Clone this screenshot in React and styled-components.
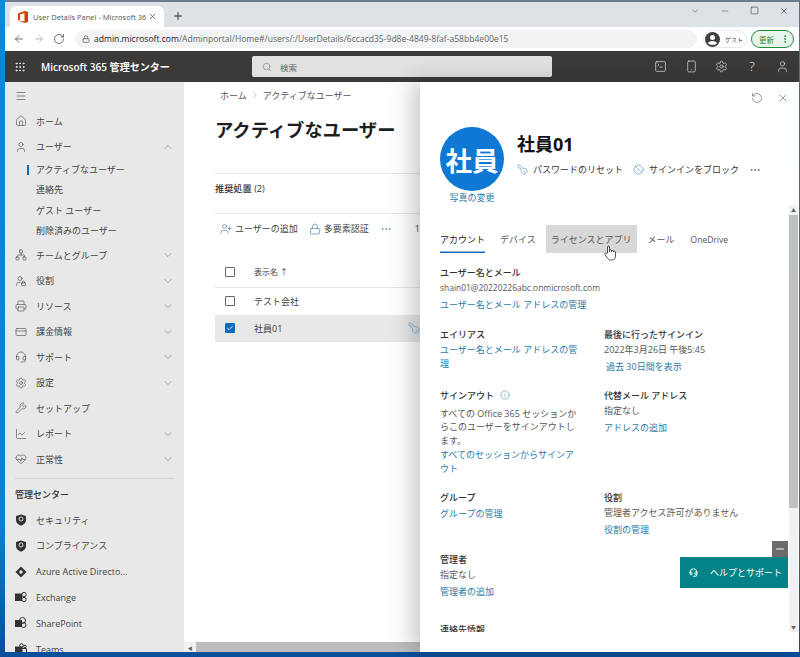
import React from 'react';
import styled, { createGlobalStyle } from 'styled-components';
import {
  ArrowLeft, ArrowRight, Ban, ChartLine, ChevronDown, ChevronRight, ChevronUp, CreditCard, Ellipsis, EllipsisVertical,
  Grip, Headset, HeartPulse, House, Info, KeyRound, Lock, Menu, Minus, Network, Plus, Printer, RotateCcw, RotateCw,
  Search, Settings, Smartphone, Square, SquareTerminal, User, UserLock, UserPlus, Wrench, X, Check,
} from 'lucide-react';

const FONT = `"Open Sans", "Noto Sans CJK JP", sans-serif`;

const Global = createGlobalStyle`
  html, body { margin: 0; padding: 0; }
  body { font-family: ${FONT}; color: #323130; }
  * { box-sizing: border-box; }
`;

const Desktop = styled.div`
  width: 800px;
  height: 657px;
  overflow: hidden;
  padding: 0 1px 5px 5px;
  background: linear-gradient(180deg, #0a8ad8 0%, #0a80cf 80%, #0b4f9c 99%);
`;
const Window = styled.div`
  height: 652px;
  display: flex;
  flex-direction: column;
  border-top: 2px solid #6f7c8b;
  background: #fff;
`;

/* browser chrome */
const TabStrip = styled.div`
  height: 25px;
  flex: none;
  display: flex;
  align-items: flex-end;
  padding-left: 5px;
  background: #dee1e6;
`;
const BrowserTab = styled.div`
  width: 154px;
  height: 21px;
  display: flex;
  align-items: center;
  padding: 0 7px 0 8px;
  background: #fff;
  border-radius: 6px 6px 0 0;
  font-size: 7.5px;
  color: #555;
`;
const TabTitle = styled.span`
  flex: 1;
  margin-left: 5px;
  overflow: hidden;
  white-space: nowrap;
`;
const NewTab = styled.span`
  display: flex;
  margin: 0 0 5px 8px;
  color: #333;
`;
const WinControls = styled.div`
  margin-left: auto;
  align-self: stretch;
  display: flex;
  align-items: center;
  gap: 20px;
  padding: 0 10px 8px 0;
  color: #444;
`;
const UrlRow = styled.div`
  height: 24px;
  flex: none;
  display: flex;
  align-items: center;
  padding: 0 4px 0 8px;
  color: #5f6368;
  background: #fff;
`;
const NavButtons = styled.div`
  display: flex;
  gap: 8px;
  width: 62px;
  flex: none;
`;
const Omnibox = styled.div`
  width: 622px;
  height: 18px;
  flex: none;
  display: flex;
  align-items: center;
  gap: 4px;
  padding-left: 7px;
  background: #f1f3f4;
  border-radius: 9px;
  font-size: 8.56px;
  color: #666;
  white-space: nowrap;
`;
const Host = styled.span`
  color: #222;
`;
const ProfileChip = styled.div`
  width: 44px;
  height: 18px;
  margin-left: 6px;
  display: flex;
  align-items: center;
  gap: 5px;
  padding-left: 1px;
  border: 1px solid #e8eaed;
  border-radius: 9px;
  font-size: 6px;
  color: #444;
`;
const UpdateChip = styled.div`
  width: 43px;
  height: 18px;
  margin-left: 4px;
  display: flex;
  align-items: center;
  justify-content: space-between;
  padding: 0 3px 0 7px;
  border: 1px solid #1e8e3e;
  border-radius: 9px;
  background: #e9f5ec;
  font-size: 7.5px;
  color: #1e8e3e;
`;

/* admin header */
const TopBar = styled.div`
  height: 31px;
  flex: none;
  display: flex;
  align-items: center;
  padding-left: 9px;
  background: #3c3a38;
  color: #fff;
`;
const Brand = styled.span`
  width: 211px;
  margin-left: 15px;
  font-size: 10.05px;
  font-weight: 600;
  white-space: nowrap;
`;
const SearchBox = styled.div`
  width: 300px;
  height: 21px;
  display: flex;
  align-items: center;
  gap: 8px;
  padding-left: 10px;
  background: #e3e1df;
  border-radius: 2px;
  font-size: 8.5px;
  color: #666;
`;
const TopIcons = styled.div`
  margin-left: auto;
  display: flex;
  align-items: center;
  gap: 17.500px;
  padding-right: 10px;
  color: #eee;
`;
const HelpGlyph = styled.span`
  width: 13px;
  text-align: center;
  font-size: 13px;
  line-height: 13px;
  font-weight: 300;
`;

const Body = styled.div`
  flex: 1;
  min-height: 0;
  display: flex;
`;

/* left nav */
const Sidebar = styled.nav`
  width: 179px;
  flex: none;
  overflow: hidden;
  padding: 1px 10px 0;
  background: #e8e8e8;
  color: #444;
`;
const NavRow = styled.div`
  height: ${p => p.$h || 25.5}px;
  display: flex;
  align-items: center;
  font-size: 9px;
  white-space: nowrap;
`;
const NavIcon = styled.span`
  width: 21px;
  flex: none;
  display: flex;
  color: #444;
`;
const NavChevron = styled.span`
  margin-left: auto;
  display: flex;
  color: #777;
`;
const SubList = styled.div`
  margin-bottom: 2px;
`;
const SubRow = styled.div`
  height: 20.300px;
  display: flex;
  align-items: center;
  padding-left: 21px;
  font-size: 9px;
  position: relative;
  &::before {
    content: '';
    display: ${p => (p.$active ? 'block' : 'none')};
    position: absolute;
    left: 12px;
    top: 5px;
    width: 2px;
    height: 10px;
    background: #0f6cbd;
  }
`;
const NavDivider = styled.div`
  height: 1px;
  margin: 6px 0 3px;
  background: #d2d2d2;
`;
const NavHeading = styled.div`
  height: 25px;
  display: flex;
  align-items: center;
  font-size: 9px;
  font-weight: 500;
  color: #333;
`;

/* users list behind the panel */
const Main = styled.main`
  flex: 1;
  min-width: 0;
  display: flex;
  flex-direction: column;
`;
const MainContent = styled.div`
  flex: 1;
  min-height: 0;
  overflow: hidden;
  padding: 0 0 0 31px;
`;
const Breadcrumb = styled.div`
  height: 26px;
  display: flex;
  align-items: center;
  gap: 3px;
  padding-left: 5px;
  font-size: 9px;
  color: #555;
  white-space: nowrap;
  svg { color: #888; }
`;
const Title = styled.h1`
  margin: 8px 0 0;
  height: 57px;
  font-size: 18.300px;
  line-height: 28px;
  font-weight: 700;
  color: #201f1e;
  white-space: nowrap;
`;
const Recommend = styled.div`
  height: 41px;
  display: flex;
  align-items: center;
  padding-bottom: 12px;
  border-top: 1px solid #e6e6e6;
  border-bottom: 1px solid #e6e6e6;
  font-size: 9.200px;
  font-weight: 500;
  color: #333;
`;
const Commands = styled.div`
  height: 29px;
  display: flex;
  align-items: center;
  padding-left: 5px;
  margin-bottom: 1px;
  font-size: 9px;
  color: #444;
  white-space: nowrap;
`;
const Command = styled.span`
  display: flex;
  align-items: center;
  gap: 3px;
  margin-right: ${p => p.$gap || 11}px;
  color: #444;
  svg { color: #3a6ea5; }
`;
const TableRow = styled.div`
  height: ${p => p.$h || 27}px;
  display: flex;
  align-items: center;
  padding: ${p => p.$pt || 0}px 0 1px 10px;
  gap: 19px;
  font-size: ${p => p.$size || 9}px;
  color: ${p => p.$color || '#444'};
  background: ${p => (p.$selected ? '#e8e8e8' : 'transparent')};
  border-bottom: ${p => (p.$line ? '1px solid #e6e6e6' : 'none')};
`;
const Check_ = styled.span`
  width: 10px;
  height: 10px;
  flex: none;
  display: flex;
  align-items: center;
  justify-content: center;
  border: 1px solid ${p => (p.$on ? '#0f6cbd' : '#666')};
  background: ${p => (p.$on ? '#0f6cbd' : '#fff')};
  border-radius: 1px;
  color: #fff;
`;
const RowKey = styled.span`
  margin-left: auto;
  display: flex;
  color: #4a90c8;
`;
const KeyIcon = styled(KeyRound)`
  transform: rotate(90deg);
`;
const HScroll = styled.div`
  height: 10px;
  flex: none;
  display: flex;
  align-items: center;
  background: #f1f1f1;
  color: #666;
  font-size: 5px;
`;
const HArrow = styled.span`
  width: 12px;
  flex: none;
  text-align: center;
`;
const HThumb = styled.div`
  flex: 1;
  align-self: stretch;
  background: #bdbdbd;
`;

/* details panel */
const Panel = styled.aside`
  width: 379px;
  flex: none;
  position: relative;
  display: flex;
  flex-direction: column;
  background: #fff;
  box-shadow: -8px 0 22px rgba(0, 0, 0, 0.22);
`;
const PanelTools = styled.div`
  height: 32px;
  flex: none;
  display: flex;
  justify-content: flex-end;
  align-items: center;
  gap: 14px;
  padding-right: 10px;
  color: #555;
`;
const PanelHead = styled.div`
  height: 91px;
  flex: none;
  display: flex;
  padding: 13px 0 0 20px;
`;
const AvatarCol = styled.div`
  width: 64px;
  flex: none;
  display: flex;
  flex-direction: column;
  align-items: center;
`;
const Avatar = styled.div`
  width: 64px;
  height: 64px;
  flex: none;
  display: flex;
  align-items: center;
  justify-content: center;
  border-radius: 50%;
  background: #0f78d4;
  color: #fff;
  font-size: 26.500px;
  font-weight: 700;
  white-space: nowrap;
`;
const PhotoLink = styled.a`
  margin-top: 1px;
  font-size: 9px;
  line-height: 12px;
  color: #2a7aa8;
  white-space: nowrap;
`;
const HeadInfo = styled.div`
  margin-left: 13px;
`;
const UserName = styled.div`
  margin-top: 4px;
  font-size: 18px;
  line-height: 26px;
  font-weight: 700;
  color: #111;
`;
const HeadActions = styled.div`
  margin-top: 6px;
  display: flex;
  align-items: center;
  font-size: 9px;
  color: #333;
  white-space: nowrap;
`;
const HeadAction = styled.span`
  display: flex;
  align-items: center;
  gap: 5px;
  margin-right: ${p => p.$gap}px;
  svg { color: #3a86c0; }
`;
const ScrollWrap = styled.div`
  flex: 1;
  min-height: 0;
  display: flex;
  padding-bottom: 20px;
`;
const PanelScroll = styled.div`
  flex: 1;
  min-width: 0;
  overflow: hidden;
  padding: 20px 0 0 20px;
`;
const Tabs = styled.div`
  height: 28px;
  display: flex;
  align-items: stretch;
  font-size: 9px;
  color: #555;
  white-space: nowrap;
`;
const Tab = styled.div`
  display: flex;
  align-items: center;
  margin-right: ${p => p.$gap || 0}px;
  padding: 0 ${p => p.$pad || 0}px;
  color: ${p => (p.$active ? '#222' : '#555')};
  background: ${p => (p.$hover ? '#d8d8d8' : 'transparent')};
  font-size: ${p => p.$size || 9}px;
  box-shadow: ${p => (p.$active ? 'inset 0 -1.5px 0 #0f6cbd' : 'none')};
`;
const Fields = styled.div`
  margin-top: 11px;
  display: grid;
  grid-template-columns: 164px 170px;
  grid-template-rows: 62px 61px 102px 62px 70px auto;
`;
const Field = styled.div`
  grid-column: ${p => (p.$wide ? '1 / span 2' : 'auto')};
  grid-row: ${p => p.$row};
  padding-right: ${p => (p.$wide ? 0 : 26)}px;
`;
const FieldTitle = styled.div`
  display: flex;
  align-items: center;
  gap: 6px;
  height: 16px;
  font-size: 9px;
  font-weight: 500;
  color: #333;
  svg { color: #2a7aa8; }
`;
const FieldText = styled.div`
  margin-top: ${p => p.$top || 0}px;
  font-size: ${p => p.$size || 9}px;
  line-height: ${p => p.$lh || 16}px;
  color: #555;
`;
const FieldLink = styled.a`
  display: block;
  margin-top: ${p => p.$top ?? 1}px;
  padding-left: ${p => p.$indent || 0}px;
  font-size: 9px;
  line-height: ${p => p.$lh || 15.500}px;
  color: #2a7aa8;
`;
const ScrollBar = styled.div`
  width: 9px;
  flex: none;
  margin-right: 1px;
  display: flex;
  flex-direction: column;
  align-items: center;
  background: #f1f1f1;
  color: #666;
  font-size: 5px;
  line-height: 10px;
`;
const Thumb = styled.div`
  width: 100%;
  height: 293px;
  background: #c1c1c1;
`;
const ArrowDown = styled.div`
  margin-top: auto;
`;
const HandCursor = styled.span`
  position: absolute;
  left: 184px;
  top: 163px;
  display: flex;
  color: #222;
`;
const HelpWidget = styled.div`
  position: absolute;
  left: 260px;
  top: 475px;
  width: 108px;
  height: 31px;
  display: flex;
  align-items: center;
  gap: 12px;
  padding-left: 9px;
  background: #038387;
  color: #fff;
  font-size: 9px;
  white-space: nowrap;
`;
const HelpMin = styled.span`
  position: absolute;
  right: 0;
  top: -16px;
  width: 16px;
  height: 16px;
  display: flex;
  align-items: center;
  justify-content: center;
  background: #6b6b6b;
  color: #fff;
`;

const OfficeLogo = () => (
  <svg width="10" height="12" viewBox="0 0 10 12">
    <path d="M0 2.500 6.500 0 10 1v10l-3.500 1L0 9.600l6.500.9V2.200L2 3.200v5.600L0 9.600z" fill="#d83b01" />
  </svg>
);
const GuestAvatar = () => (
  <svg width="15" height="15" viewBox="0 0 15 15">
    <circle cx="7.500" cy="7.500" r="7.500" fill="#3c4043" />
    <circle cx="7.500" cy="5.600" r="2.500" fill="#fff" />
    <path d="M2.800 11.300c1-1.700 2.800-2.400 4.700-2.400s3.700.7 4.700 2.400c-2.400 2.300-7 2.300-9.400 0z" fill="#fff" />
  </svg>
);
const ShieldIcon = () => (
  <svg width="12" height="12" viewBox="0 0 12 12">
    <path d="M6 .5 11 2v4c0 3-2.200 4.700-5 5.700C3.200 10.700 1 9 1 6V2z" fill="#333" />
    <circle cx="6" cy="5" r="2" fill="none" stroke="#e8e8e8" strokeWidth=".9" />
  </svg>
);
const AzureIcon = () => (
  <svg width="12" height="12" viewBox="0 0 12 12">
    <path d="M6 .5 11.500 6 6 11.500 .5 6z" fill="#333" />
    <circle cx="6" cy="6" r="1.700" fill="#e8e8e8" />
  </svg>
);
const ExchangeIcon = () => (
  <svg width="12" height="12" viewBox="0 0 12 12" fill="none" stroke="#333">
    <rect x=".5" y="3" width="6" height="6.500" fill="#333" />
    <circle cx="9" cy="3.500" r="2.200" />
    <circle cx="9" cy="8.500" r="2.200" />
  </svg>
);
const SharePointIcon = () => (
  <svg width="12" height="12" viewBox="0 0 12 12" fill="none" stroke="#333">
    <circle cx="7.500" cy="3.500" r="3" />
    <circle cx="8.500" cy="8" r="2.500" />
    <rect x=".5" y="3.500" width="6" height="6" fill="#333" />
  </svg>
);
const TeamsIcon = () => (
  <svg width="12" height="12" viewBox="0 0 12 12" fill="none" stroke="#333">
    <circle cx="6.500" cy="2.500" r="1.800" />
    <circle cx="10" cy="3.500" r="1.300" />
    <path d="M7 5.500h4.500v3.500a2 2 0 0 1-4 0" />
    <rect x=".5" y="4" width="6.500" height="6.500" fill="#333" />
  </svg>
);

const Ic = ({ as: I, size = 12, w = 1.2, ...rest }) => <I size={size} strokeWidth={w} {...rest} />;

const navTop = [
  { label: 'チームとグループ', icon: Network, more: true },
  { label: '役割', icon: UserLock, more: true },
  { label: 'リソース', icon: Printer, more: true },
  { label: '課金情報', icon: CreditCard, more: true },
  { label: 'サポート', icon: Headset, more: true },
  { label: '設定', icon: Settings, more: true },
  { label: 'セットアップ', icon: Wrench },
  { label: 'レポート', icon: ChartLine, more: true },
  { label: '正常性', icon: HeartPulse, more: true },
];
const subItems = ['アクティブなユーザー', '連絡先', 'ゲスト ユーザー', '削除済みのユーザー'];
const centers = [
  { label: 'セキュリティ', icon: ShieldIcon },
  { label: 'コンプライアンス', icon: ShieldIcon },
  { label: 'Azure Active Directo...', icon: AzureIcon },
  { label: 'Exchange', icon: ExchangeIcon },
  { label: 'SharePoint', icon: SharePointIcon },
  { label: 'Teams', icon: TeamsIcon },
];

function Nav() {
  return (
    <Sidebar>
      <NavRow><NavIcon><Ic as={Menu} /></NavIcon></NavRow>
      <NavRow><NavIcon><Ic as={House} /></NavIcon>ホーム</NavRow>
      <NavRow>
        <NavIcon><Ic as={User} /></NavIcon>ユーザー
        <NavChevron><Ic as={ChevronUp} /></NavChevron>
      </NavRow>
      <SubList>
        {subItems.map((s, i) => <SubRow key={s} $active={i === 0}>{s}</SubRow>)}
      </SubList>
      {navTop.map(n => (
        <NavRow key={n.label}>
          <NavIcon><Ic as={n.icon} /></NavIcon>{n.label}
          {n.more && <NavChevron><Ic as={ChevronDown} /></NavChevron>}
        </NavRow>
      ))}
      <NavDivider />
      <NavHeading>管理センター</NavHeading>
      {centers.map(c => {
        const I = c.icon;
        return <NavRow key={c.label} $h={25.8}><NavIcon><I /></NavIcon>{c.label}</NavRow>;
      })}
    </Sidebar>
  );
}

function UserList() {
  return (
    <Main>
      <MainContent>
        <Breadcrumb>ホーム <Ic as={ChevronRight} size={10} />アクティブなユーザー</Breadcrumb>
        <Title>アクティブなユーザー</Title>
        <Recommend>推奨処置 (2)</Recommend>
        <Commands>
          <Command><Ic as={UserPlus} />ユーザーの追加</Command>
          <Command><Ic as={Lock} />多要素認証</Command>
          <Command $gap={23}><Ic as={Ellipsis} /></Command>
          1
        </Commands>
        <TableRow $h={44} $pt={13} $line $size={8}><Check_ />表示名 ↑</TableRow>
        <TableRow><Check_ />テスト会社</TableRow>
        <TableRow $selected>
          <Check_ $on><Ic as={Check} size={8} w={2.4} /></Check_>社員01
          <RowKey><KeyIcon size={12} strokeWidth={1.2} /></RowKey>
        </TableRow>
      </MainContent>
      <HScroll>
        <HArrow>◀</HArrow>
        <HThumb />
      </HScroll>
    </Main>
  );
}

function Details() {
  return (
    <Panel>
      <PanelTools>
        <Ic as={RotateCcw} />
        <Ic as={X} />
      </PanelTools>
      <PanelHead>
        <AvatarCol>
          <Avatar>社員</Avatar>
          <PhotoLink>写真の変更</PhotoLink>
        </AvatarCol>
        <HeadInfo>
          <UserName>社員01</UserName>
          <HeadActions>
            <HeadAction $gap={10}><KeyIcon size={11} strokeWidth={1.2} />パスワードのリセット</HeadAction>
            <HeadAction $gap={10}><Ic as={Ban} size={11} />サインインをブロック</HeadAction>
            <Ic as={Ellipsis} />
          </HeadActions>
        </HeadInfo>
      </PanelHead>
      <ScrollWrap>
        <PanelScroll>
          <Tabs>
            <Tab $active $gap={15}>アカウント</Tab>
            <Tab $gap={10}>デバイス</Tab>
            <Tab $hover $pad={5} $gap={11}>ライセンスとアプリ</Tab>
            <Tab $gap={16}>メール</Tab>
            <Tab $size={8.5}>OneDrive</Tab>
          </Tabs>
          <Fields>
            <Field $wide $row={1}>
              <FieldTitle>ユーザー名とメール</FieldTitle>
              <FieldText $size={8.45}>shain01@20220226abc.onmicrosoft.com</FieldText>
              <FieldLink>ユーザー名とメール アドレスの管理</FieldLink>
            </Field>
            <Field $row={2}>
              <FieldTitle>エイリアス</FieldTitle>
              <FieldLink $lh={14}>ユーザー名とメール アドレスの管理</FieldLink>
            </Field>
            <Field $row={2}>
              <FieldTitle>最後に行ったサインイン</FieldTitle>
              <FieldText>2022年3月26日 午後5:45</FieldText>
              <FieldLink $indent={2}>過去 30日間を表示</FieldLink>
            </Field>
            <Field $row={3}>
              <FieldTitle>サインアウト <Ic as={Info} size={10} /></FieldTitle>
              <FieldText $lh={13.3} $top={4}>すべての Office 365 セッションからこのユーザーをサインアウトします。</FieldText>
              <FieldLink $lh={14} $top={1}>すべてのセッションからサインアウト</FieldLink>
            </Field>
            <Field $row={3}>
              <FieldTitle>代替メール アドレス</FieldTitle>
              <FieldText>指定なし</FieldText>
              <FieldLink>アドレスの追加</FieldLink>
            </Field>
            <Field $row={4}>
              <FieldTitle>グループ</FieldTitle>
              <FieldLink>グループの管理</FieldLink>
            </Field>
            <Field $row={4}>
              <FieldTitle>役割</FieldTitle>
              <FieldText>管理者アクセス許可がありません</FieldText>
              <FieldLink>役割の管理</FieldLink>
            </Field>
            <Field $row={5}>
              <FieldTitle>管理者</FieldTitle>
              <FieldText>指定なし</FieldText>
              <FieldLink>管理者の追加</FieldLink>
            </Field>
            <Field $row={6}>
              <FieldTitle>連絡先情報</FieldTitle>
            </Field>
          </Fields>
        </PanelScroll>
        <ScrollBar>
          <span>▲</span>
          <Thumb />
          <ArrowDown>▼</ArrowDown>
        </ScrollBar>
      </ScrollWrap>
      <HandCursor>
        <svg width="13" height="16" viewBox="0 0 13 16">
          <path d="M3.500 8V2a1 1 0 0 1 2 0v4.500V5.700a1 1 0 0 1 2 .1v1-.4a1 1 0 0 1 2 .1v.7a1 1 0 0 1 2 .1V11c0 2.500-1.300 4-3.500 4H6.500C5 15 4 14 3 12.500L1 9.500c-.6-1 .7-2 1.500-1.100z" fill="#fff" stroke="#222" strokeWidth=".8" />
        </svg>
      </HandCursor>
      <HelpWidget>
        <Ic as={Headset} size={9} w={2.6} />ヘルプとサポート
        <HelpMin><Ic as={Minus} size={12} w={2} /></HelpMin>
      </HelpWidget>
    </Panel>
  );
}

export default function App() {
  return (
    <Desktop>
      <Global />
      <Window>
        <TabStrip>
          <BrowserTab>
            <OfficeLogo />
            <TabTitle>User Details Panel - Microsoft 36</TabTitle>
            <Ic as={X} size={9} w={2} />
          </BrowserTab>
          <NewTab><Ic as={Plus} size={12} w={2} /></NewTab>
          <WinControls>
            <Ic as={ChevronDown} size={10} />
            <Ic as={Minus} size={10} />
            <Ic as={Square} size={9} w={1.6} />
            <Ic as={X} size={10} w={1.6} />
          </WinControls>
        </TabStrip>
        <UrlRow>
          <NavButtons>
            <Ic as={ArrowLeft} w={1.8} />
            <Ic as={ArrowRight} w={1.8} color="#b0b4b8" />
            <Ic as={RotateCw} w={1.8} />
          </NavButtons>
          <Omnibox>
            <Ic as={Lock} size={8} w={2.4} />
            <span><Host>admin.microsoft.com</Host>/Adminportal/Home#/users/:/UserDetails/6ccacd35-9d8e-4849-8faf-a58bb4e00e15</span>
          </Omnibox>
          <ProfileChip><GuestAvatar />ゲスト</ProfileChip>
          <UpdateChip>更新<Ic as={EllipsisVertical} size={10} w={2.4} /></UpdateChip>
        </UrlRow>
        <TopBar>
          <Ic as={Grip} size={12} w={1.6} />
          <Brand>Microsoft 365 管理センター</Brand>
          <SearchBox><Ic as={Search} size={10} />検索</SearchBox>
          <TopIcons>
            <Ic as={SquareTerminal} size={13} />
            <Ic as={Smartphone} size={13} />
            <Ic as={Settings} size={13} />
            <HelpGlyph>?</HelpGlyph>
            <Ic as={User} size={13} />
          </TopIcons>
        </TopBar>
        <Body>
          <Nav />
          <UserList />
          <Details />
        </Body>
      </Window>
    </Desktop>
  );
}
